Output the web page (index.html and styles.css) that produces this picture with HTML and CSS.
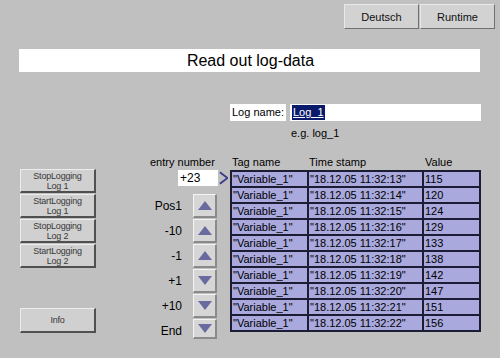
FILE: index.html
```html
<!DOCTYPE html>
<html lang="en">
<head>
    <meta charset="UTF-8">
    <title>Read out log-data</title>
    <link rel="stylesheet" href="styles.css">
</head>
<body>
    <div class="screen">
        <div class="topbar">
            <button class="top-btn">Deutsch</button>
            <button class="top-btn">Runtime</button>
        </div>

        <div class="title">Read out log-data</div>

        <div class="log-row">
            <div class="log-label">Log name:</div>
            <div class="log-input"><span class="sel">Log_1</span></div>
        </div>
        <div class="hint">e.g. log_1</div>

        <div class="main">
            <div class="side">
                <button class="side-btn">StopLogging<br>Log 1</button>
                <button class="side-btn">StartLogging<br>Log 1</button>
                <button class="side-btn">StopLogging<br>Log 2</button>
                <button class="side-btn">StartLogging<br>Log 2</button>
                <button class="side-btn info">Info</button>
            </div>

            <div class="nav">
                <div class="nav-head">entry number</div>
                <div class="entry">
                    <div class="entry-box">+23</div>
                    <svg class="pointer" width="10" height="14" viewBox="0 0 10 14"><path d="M1 1 L9 7 L1 13" fill="none" stroke="#3c3c8c" stroke-width="2"/></svg>
                </div>
                <div class="nav-rows">
                    <div class="nav-row"><span class="nav-label">Pos1</span><button class="arrow up"></button></div>
                    <div class="nav-row"><span class="nav-label">-10</span><button class="arrow up"></button></div>
                    <div class="nav-row"><span class="nav-label">-1</span><button class="arrow up"></button></div>
                    <div class="nav-row"><span class="nav-label">+1</span><button class="arrow down"></button></div>
                    <div class="nav-row"><span class="nav-label">+10</span><button class="arrow down"></button></div>
                    <div class="nav-row last"><span class="nav-label">End</span><button class="arrow down"></button></div>
                </div>
            </div>

            <div class="data">
                <div class="data-head">
                    <span>Tag name</span>
                    <span>Time stamp</span>
                    <span>Value</span>
                </div>
                <div class="grid">
                    <div>"Variable_1"</div><div>"18.12.05 11:32:13"</div><div>115</div>
                    <div>"Variable_1"</div><div>"18.12.05 11:32:14"</div><div>120</div>
                    <div>"Variable_1"</div><div>"18.12.05 11:32:15"</div><div>124</div>
                    <div>"Variable_1"</div><div>"18.12.05 11:32:16"</div><div>129</div>
                    <div>"Variable_1"</div><div>"18.12.05 11:32:17"</div><div>133</div>
                    <div>"Variable_1"</div><div>"18.12.05 11:32:18"</div><div>138</div>
                    <div>"Variable_1"</div><div>"18.12.05 11:32:19"</div><div>142</div>
                    <div>"Variable_1"</div><div>"18.12.05 11:32:20"</div><div>147</div>
                    <div>"Variable_1"</div><div>"18.12.05 11:32:21"</div><div>151</div>
                    <div>"Variable_1"</div><div>"18.12.05 11:32:22"</div><div>156</div>
                </div>
            </div>
        </div>
    </div>
</body>
</html>
```

FILE: styles.css
```css
body {
    margin: 0;
    background: #c0c0c0;
    font-family: 'Liberation Sans', Arial, sans-serif;
    color: #000;
}
.screen {
    width: 500px;
    height: 358px;
    overflow: hidden;
}
button {
    font-family: inherit;
    padding: 0;
    margin: 0;
}
.topbar {
    display: flex;
    justify-content: flex-end;
    gap: 1px;
    padding: 4px 5px 0 0;
}
.top-btn {
    width: 75px;
    height: 25px;
    background: #d2d2d2;
    border: 1px solid #e8e8e8;
    border-right-color: #707070;
    border-bottom-color: #707070;
    font-size: 11px;
    color: #101010;
}
.title {
    margin: 20px 20px 0 19px;
    height: 23px;
    background: #fff;
    font-size: 16px;
    line-height: 23px;
    text-align: center;
    padding-left: 2px;
}
.log-row {
    display: flex;
    margin: 32px 0 0 230px;
    height: 17px;
    gap: 4px;
}
.log-label {
    width: 54px;
    background: #fff;
    font-size: 11px;
    line-height: 17px;
    padding-left: 2px;
}
.log-input {
    width: 189px;
    background: #fff;
    font-size: 11px;
    line-height: 17px;
    padding-left: 2px;
}
.sel {
    background: #0a1a6a;
    color: #fff;
    padding: 1px 1px 2px;
    text-decoration: underline;
}
.hint {
    margin: 6px 0 0 291px;
    font-size: 11px;
    line-height: 12px;
}
.main {
    display: flex;
    margin-top: 16px;
}
.side {
    display: flex;
    flex-direction: column;
    gap: 1px;
    margin-left: 20px;
    padding-top: 14px;
    width: 76px;
}
.side-btn {
    height: 24px;
    background: #d0d0d0;
    border: 1px solid #ececec;
    border-right: 2px solid #505050;
    border-bottom: 2px solid #505050;
    font-size: 9px;
    line-height: 10px;
    color: #383838;
    letter-spacing: -0.2px;
}
.side-btn.info {
    margin-top: 39px;
    height: 25px;
}
.nav {
    width: 88px;
    margin-left: 44px;
}
.nav-head {
    height: 14px;
    font-size: 11px;
    line-height: 14px;
    padding-left: 10px;
}
.entry {
    display: flex;
    align-items: center;
    margin: 1px 0 0 38px;
    gap: 1px;
}
.entry-box {
    width: 40px;
    height: 16px;
    background: #fff;
    font-size: 12px;
    line-height: 16px;
    padding-left: 2px;
}
.nav-rows {
    margin-top: 8px;
}
.nav-row {
    display: flex;
    align-items: center;
    height: 24px;
    margin-bottom: 1px;
}
.nav-row.last {
    height: 20px;
    align-items: flex-start;
}
.nav-label {
    width: 42px;
    text-align: right;
    font-size: 12px;
    margin-right: 11px;
}
.nav-row.last .nav-label {
    padding-top: 5px;
}
.arrow {
    width: 24px;
    height: 24px;
    background: #d6d6d6;
    border: 1px solid #f4f4f4;
    border-right: 2px solid #8a8a8a;
    border-bottom: 2px solid #8a8a8a;
    display: flex;
    align-items: center;
    justify-content: center;
}
.nav-row.last .arrow {
    height: 20px;
}
.arrow::after {
    content: "";
    border-left: 7px solid transparent;
    border-right: 7px solid transparent;
}
.arrow.up::after {
    border-bottom: 9px solid #6a6aa0;
}
.arrow.down::after {
    border-top: 9px solid #6a6aa0;
}
.data {
    margin-left: 2px;
}
.data-head {
    display: grid;
    grid-template-columns: 77px 116px 58px;
    height: 15px;
    font-size: 11px;
    line-height: 14px;
}
.data-head span {
    padding-left: 2px;
}
.grid {
    display: grid;
    grid-template-columns: 75px 113px 55px;
    grid-auto-rows: 14px;
    gap: 2px;
    padding: 2px;
    background: #1c1c34;
    width: 247px;
}
.grid div {
    background: #a9a9dd;
    font-size: 11px;
    line-height: 14px;
    padding-left: 1px;
    white-space: nowrap;
    overflow: hidden;
}
```
